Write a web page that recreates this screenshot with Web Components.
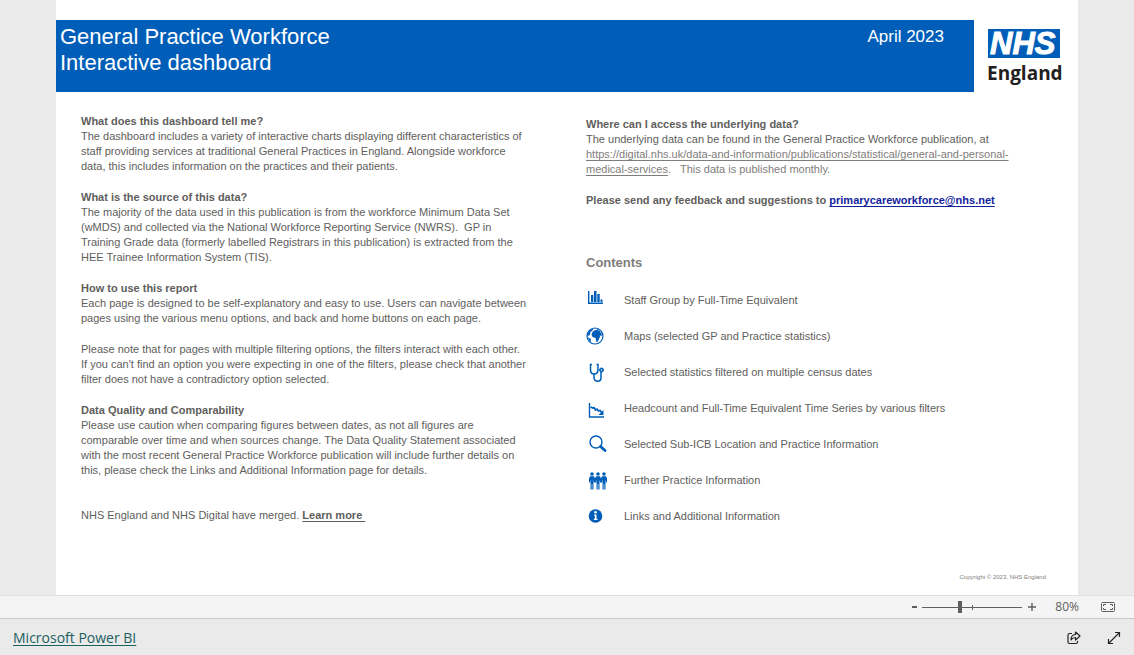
<!DOCTYPE html>
<html lang="en">
<head>
<meta charset="utf-8">
<title>General Practice Workforce</title>
<style>
  body { margin: 0; min-height: 100vh; display: flex; flex-direction: column; background: #eaeaea; font-family: "Liberation Sans", Arial, sans-serif; color: #605e5c; }
  report-page { flex: 1; }
</style>
</head>
<body>
<report-page>
  <report-banner slot="banner">
    <span slot="title">General Practice Workforce<br>Interactive dashboard</span>
    <span slot="date">April 2023</span>
  </report-banner>
  <info-text slot="about">
    <section><h2>What does this dashboard tell me?</h2>
    <p>The dashboard includes a variety of interactive charts displaying different characteristics of staff providing services at traditional General Practices in England. Alongside workforce data, this includes information on the practices and their patients.</p></section>
    <section><h2>What is the source of this data?</h2>
    <p>The majority of the data used in this publication is from the workforce Minimum Data Set (wMDS) and collected via the National Workforce Reporting Service (NWRS).&nbsp; GP in Training Grade data (formerly labelled Registrars in this publication) is extracted from the HEE Trainee Information System (TIS).</p></section>
    <section><h2>How to use this report</h2>
    <p>Each page is designed to be self-explanatory and easy to use. Users can navigate between pages using the various menu options, and back and home buttons on each page.</p></section>
    <section><p>Please note that for pages with multiple filtering options, the filters interact with each other. If you can't find an option you were expecting in one of the filters, please check that another filter does not have a contradictory option selected.</p></section>
    <section><h2>Data Quality and Comparability</h2>
    <p>Please use caution when comparing figures between dates, as not all figures are<br>comparable over time and when sources change. The Data Quality Statement associated with the most recent General Practice Workforce publication will include further details on this, please check the Links and Additional Information page for details.</p></section>
    <section class="last"><p>NHS England and NHS Digital have merged. <a class="strong" href="#learn">Learn more&nbsp;</a></p></section>
  </info-text>
  <info-text slot="access">
    <section><h2>Where can I access the underlying data?</h2>
    <p>The underlying data can be found in the General Practice Workforce publication, at <span class="soft"><a href="#publication">https://digital.nhs.uk/data-and-information/publications/statistical/general-and-personal-medical-services</a>.&nbsp;&nbsp; This data is published monthly.</span></p></section>
    <section><p class="strong">Please send any feedback and suggestions to <a class="mail" href="#mail">primarycareworkforce@nhs.net</a></p></section>
  </info-text>
  <contents-list slot="contents">
    <contents-item icon="bars">Staff Group by Full-Time Equivalent</contents-item>
    <contents-item icon="globe">Maps (selected GP and Practice statistics)</contents-item>
    <contents-item icon="steth">Selected statistics filtered on multiple census dates</contents-item>
    <contents-item icon="trend">Headcount and Full-Time Equivalent Time Series by various filters</contents-item>
    <contents-item icon="search">Selected Sub-ICB Location and Practice Information</contents-item>
    <contents-item icon="people">Further Practice Information</contents-item>
    <contents-item icon="info">Links and Additional Information</contents-item>
  </contents-list>
  <span slot="copyright">Copyright © 2023, NHS England</span>
</report-page>
<zoom-bar></zoom-bar>
<embed-footer></embed-footer>

<script>
function define(name, html, setup) {
  const template = document.createElement('template');
  template.innerHTML = html;
  customElements.define(name, class extends HTMLElement {
    connectedCallback() {
      if (this.shadowRoot) return;
      this.attachShadow({ mode: 'open' }).append(template.content.cloneNode(true));
      if (setup) setup(this);
    }
  });
}

define('nhs-logo', `
<style>
  :host { display: block; }
  svg { display: block; overflow: visible; }
</style>
<svg width="80" height="60" viewBox="0 0 80 60" role="img" aria-label="NHS England">
  <rect x="1" y="1" width="72" height="29" fill="#005eb8"/>
  <text x="3" y="26" font-family="Liberation Sans, Arial, sans-serif" font-size="31" font-weight="700" font-style="italic" fill="#fff" stroke="#fff">NHS</text>
  <text x="0" y="52" font-family="Open Sans, sans-serif" font-size="19" font-weight="700" fill="#231f20">England</text>
</svg>`);

define('report-banner', `
<style>
  :host { display: flex; }
  header { flex: 1; display: flex; justify-content: space-between; background: #005eb8; color: #fff; padding: 4px 30px 16px 4px; }
  h1 { margin: 0; font-weight: 400; font-size: 22px; line-height: 26px; }
  time { font-size: 17px; line-height: 26px; }
  nhs-logo { padding: 8px 11px 0 13px; }
</style>
<header><h1><slot name="title"></slot></h1><time datetime="2023-04"><slot name="date"></slot></time></header>
<nhs-logo></nhs-logo>`);

/* Moves the authored prose into the shadow root so the typography below applies to it. */
define('info-text', `
<style>
  :host { display: flex; flex-direction: column; gap: 16px; font-size: 11px; line-height: 15px; }
  h2, p { margin: 0; font-size: inherit; }
  .last { margin-top: 14px; }
  .strong { font-weight: 700; }
  .soft { color: #7f7d7b; }
  a { color: inherit; text-underline-offset: 2px; }
  a.mail { color: #12239e; }
</style>`, host => host.shadowRoot.append(...host.childNodes));

const icons = {
  bars: '<path d="M2.700 0v12.300H17" fill="none" stroke-width="1.400"/><path d="M5 4h2.300v7H5zM8 0h2.500v11H8zM11.300 3h2.400v8h-2.400zM14.500 8.500h2V11h-2z" stroke="none"/>',
  globe: '<circle cx="9" cy="9" r="8" fill="#fff" stroke-width="1.200"/><path d="M8 3.500L10.500 3l3 .5L15 6l1.500 2.500H14.500L13 12l-1.500 3H10.500L9.500 11 6.500 10 5.500 7.500 6.500 5zM1.500 8C2 4.500 4.500 2 7.500 1.500L6.500 3.500 4.500 5 4 7.500 2.500 9zM10.500 1.200l3.500 2-3-.5zM15 3.500l2 4-1.500-1.500zM2 10.500l2.500 1 .5 2.500L4.500 15Q2.500 13 2 10.500z" stroke="none"/>',
  steth: '<path d="M6 1.500H4.500v5C4.500 9.500 6 11 8 11s4-1.500 4-4.500v-5h-1.500M8 11v3.500c0 5.200 7 4.500 7 .5V9" fill="none" stroke-width="1.500"/><circle cx="15.500" cy="7" r="2"/><circle cx="15.500" cy="7" r=".8" fill="#fff" stroke="none"/>',
  trend: '<path d="M3.500 4v14H18" fill="none" stroke-width="1.400"/><path d="M4.500 8l2.500 1 1-.5L9.500 11l1.500-1 1.500 2 1.500-.5 2.500 3" fill="none" stroke-width="1.600"/><path d="M17.500 11v5H12.500z" stroke="none"/>',
  search: '<circle cx="10" cy="7" r="6" fill="none" stroke-width="1.400"/><path d="M14.500 11.500l4.500 4" stroke-width="2.800" stroke-linecap="round"/>',
  people: [6, 12, 18].map(x => `<g stroke="none"><circle cx="${x}" cy="3" r="1.800"/><path d="M${x - 2} 5.300h4l1 2.200v4h-1V8.500l-.5 2.500v7.500h-1.200V13h-.6v5.500h-1.200V11l-.5-2.500v3h-1v-4z"/></g>`).join(''),
  info: '<circle cx="9.500" cy="9" r="6.800" stroke="none"/><path d="M8 7.500h2.500v4.300h1V13H7.800v-1.200h1V8.500H8z" fill="#fff" stroke="none"/><circle cx="9.500" cy="5.300" r="1.300" fill="#fff" stroke="none"/>'
};

define('contents-item', `
<style>
  :host { display: block; }
  a { display: flex; align-items: center; gap: 19px; height: 36px; color: inherit; text-decoration: none; }
  svg { display: block; width: 19px; height: 19px; fill: #005eb8; stroke: #005eb8; overflow: visible; }
</style>
<a href="#page"><svg viewBox="0 0 19 19" aria-hidden="true"></svg><span><slot></slot></span></a>`,
host => { host.shadowRoot.querySelector('svg').innerHTML = icons[host.getAttribute('icon')]; });

define('contents-list', `
<style>
  :host { display: block; font-size: 11px; line-height: 15px; }
  h2 { margin: 0 0 11px; font-size: 13px; line-height: 16px; color: #7f7d7b; }
</style>
<h2>Contents</h2>
<nav aria-label="Contents"><slot></slot></nav>`);

define('report-page', `
<style>
  :host { display: block; padding: 0 56px; }
  main { min-height: 100%; box-sizing: border-box; background: #fff; padding: 20px 0 13px; }
  .columns { display: grid; grid-template-columns: 1fr 1fr; gap: 58px; padding: 22px 45px 0 25px; }
  .right { padding-top: 3px; }
  .contents { padding-top: 47px; }
  small { display: block; text-align: right; padding: 38px 32px 0 0; font-size: 6px; line-height: 10px; color: #7f7d7b; }
</style>
<main>
  <slot name="banner"></slot>
  <div class="columns">
    <slot name="about"></slot>
    <div class="right"><slot name="access"></slot><div class="contents"><slot name="contents"></slot></div></div>
  </div>
  <small><slot name="copyright"></slot></small>
</main>`);

define('zoom-bar', `
<style>
  :host { display: flex; align-items: center; justify-content: flex-end; height: 22px; padding-right: 19px; background: #f4f4f4; border-top: 1px solid #e0e0e0; border-bottom: 1px solid #c8c8c8; font: 12px/22px "Open Sans", sans-serif; color: #605e5c; }
  button { border: 0; padding: 0; background: none; color: inherit; font: inherit; width: 14px; height: 22px; display: grid; place-items: center; }
  input { appearance: none; margin: 0 3px 0 1px; width: 100px; height: 12px; background: linear-gradient(#605e5c, #605e5c) 50px 4px / 1px 5px no-repeat, linear-gradient(#605e5c, #605e5c) 0 6px / 100% 1px no-repeat; }
  input::-webkit-slider-thumb { appearance: none; width: 4px; height: 12px; background: #605e5c; }
  output { width: 40px; text-align: right; }
  .fit { margin-left: 22px; }
</style>
<button aria-label="Zoom out"><svg width="6" height="10"><path d="M1 4h5v2H1z" fill="#605e5c"/></svg></button>
<input type="range" min="0" max="100" value="38" aria-label="Zoom">
<button aria-label="Zoom in"><svg width="8" height="8"><path d="M0 4h8M4 0v8" stroke="#605e5c" stroke-width="1.400"/></svg></button>
<output>80%</output>
<button class="fit" aria-label="Fit to page"><svg width="14" height="11" fill="none" stroke="#605e5c"><rect x=".5" y=".5" width="13" height="9" rx="1"/><path d="M5 2.500H2.500V4M9 2.500h2.500V4M5 7.500H2.500V6M9 7.500h2.500V6"/></svg></button>`);

define('embed-footer', `
<style>
  :host { display: flex; align-items: center; height: 36px; padding: 2px 13px 0; gap: 26px; background: #eaeaea; box-sizing: border-box; }
  a { margin-right: auto; font: 500 13px/20px "Open Sans", sans-serif; color: #1a6060; text-underline-offset: 2px; font-size: 14px; }
  button { border: 0; padding: 0; background: none; display: block; height: 14px; }
  svg { display: block; }
</style>
<a href="#powerbi">Microsoft Power BI</a>
<button aria-label="Share"><svg width="14" height="14" fill="none" stroke="#252423" stroke-width="1.200"><path d="M5 2.500H2.500Q1 2.500 1 4v7q0 1.500 1.500 1.500H9q1.500 0 1.500-1.500v-1"/><path d="M8.500 1l4.500 4-4.500 4V6.500Q5.500 6.500 4 9 4 3.800 8.500 3.500z" stroke-linejoin="round"/></svg></button>
<button aria-label="Full screen"><svg width="14" height="14" fill="none" stroke="#252423" stroke-width="1.200"><path d="M1.500 12.500l11-11M8 1.500h4.500V6M1.500 8v4.500H6"/></svg></button>`);
</script>
</body>
</html>
